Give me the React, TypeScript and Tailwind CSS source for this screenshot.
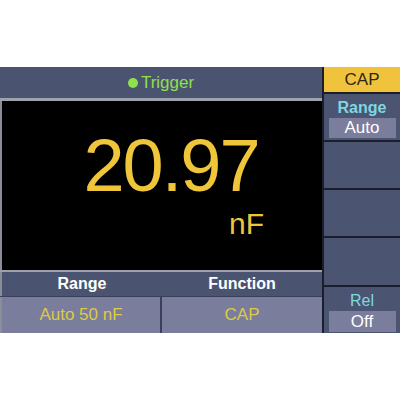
export default function App() {
  const font = { fontFamily: '"Liberation Sans", Arial, sans-serif' }
  return (
    <div className="w-[400px] h-[400px] bg-white pt-[67px]" style={font}>
      <div className="flex h-[266px] bg-[#1b1f2c]">
        {/* main display */}
        <div className="flex w-[322px] flex-col">
          <div className="flex h-[31px] items-center justify-center bg-[#4a5471]">
            <span className="mr-[3px] h-[10px] w-[10px] rounded-full bg-[#8fe04b]" />
            <span className="text-[17px] leading-none text-[#8fe04b]">Trigger</span>
          </div>
          <div className="h-[3px] bg-[#9ea2aa]" />
          <div className="flex h-[169px] flex-col border-l-2 border-[#8a8e98] bg-black">
            <div className="pt-[28px] pl-[18px] text-center text-[74px] leading-none tracking-[-2px] text-[#efc53a]">
              20.97
            </div>
            <div className="mt-[6px] pr-[58px] text-right text-[30px] leading-none text-[#efc53a]">
              nF
            </div>
          </div>
          <div className="h-[2px] bg-[#9ea2aa]" />
          <div className="flex h-[24px] border-l-2 border-[#8a8e98] bg-[#4a5471] text-[16px] font-bold text-white">
            <div className="flex w-[160px] items-center justify-center">Range</div>
            <div className="flex flex-1 items-center justify-center">Function</div>
          </div>
          <div className="h-[1px] bg-[#3a4058]" />
          <div className="flex h-[36px] gap-[2px] border-l-2 border-[#8a8e98] bg-[#3a4058] text-[17px] text-[#dccb42]">
            <div className="flex w-[158px] items-center justify-center bg-[#7b7d9d]">Auto 50 nF</div>
            <div className="flex flex-1 items-center justify-center bg-[#7b7d9d]">CAP</div>
          </div>
        </div>

        {/* soft keys */}
        <div className="ml-[2px] flex w-[76px] flex-col gap-[2px]">
          <div className="flex h-[25px] items-center justify-center bg-[#f1c33c] text-[17px] text-[#2b2714]">
            CAP
          </div>
          <div className="flex h-[46px] flex-col items-center bg-[#4b5571] pt-[4px]">
            <span className="text-[16px] font-bold leading-[20px] text-[#7fd7e0]">Range</span>
            <div className="flex h-[20px] w-[67px] items-center justify-center bg-[#7b7d9d] text-[17px] text-white">
              Auto
            </div>
          </div>
          <div className="h-[46px] bg-[#4b5571]" />
          <div className="h-[46px] bg-[#4b5571]" />
          <div className="h-[47px] bg-[#4b5571]" />
          <div className="flex h-[46px] flex-col items-center bg-[#4b5571] pt-[4px]">
            <span className="text-[16px] leading-[20px] text-[#7fd7e0]">Rel</span>
            <div className="flex h-[21px] w-[67px] items-center justify-center bg-[#7b7d9d] text-[17px] text-white">
              Off
            </div>
          </div>
        </div>
      </div>
    </div>
  )
}
